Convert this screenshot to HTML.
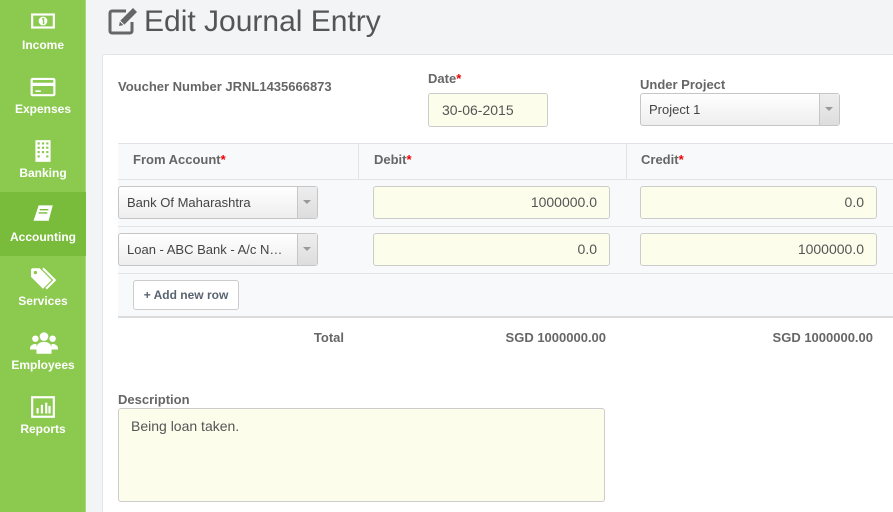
<!DOCTYPE html>
<html style="width:893px;height:512px;overflow:hidden"><head><style>
*{margin:0;padding:0;box-sizing:border-box}
body{width:893px;height:512px;overflow:hidden;background:#f3f4f6;font-family:"Liberation Sans",sans-serif;position:relative;color:#555}
.sb{position:absolute;left:0;top:0;width:86px;height:512px;background:#8bc94f;border-right:1px solid #a6d87a}
.it{position:absolute;left:0;width:86px;height:64px;color:#fff;font-weight:bold;font-size:12px;text-align:center}
.it.act{background:#79bb3a}
.it svg{position:absolute;left:30px;top:11px}
.it span{position:absolute;left:0;right:0;top:38px}
.a{position:absolute}
.lbl{font-size:13px;font-weight:bold;color:#666}
.req{color:#e00}
.inp{position:absolute;background:#fdfdec;border:1px solid #ccc;border-radius:3px;font-size:14px;color:#555}
.sel{position:absolute;background:linear-gradient(#fff,#eee);border:1px solid #c6c6c6;border-radius:3px;font-size:13px;color:#444;padding-left:8px;line-height:31px}
.sel:after{content:"";position:absolute;right:0;top:0;bottom:0;width:19px;border-left:1px solid #c6c6c6;background:linear-gradient(#eee,#ddd)}
.sel i{position:absolute;right:6px;top:13px;width:0;height:0;border:4px solid transparent;border-top:4px solid #999;z-index:2}
.num{text-align:right;padding-right:12px;line-height:31px}
</style></head><body>
<div class="sb">
 <div class="it" style="top:0"><svg width="26" height="20" viewBox="0 0 24 18"><rect x="1" y="2" width="22" height="14" fill="#fff"/><rect x="3" y="4" width="18" height="10" fill="#8bc94f"/><circle cx="12" cy="9" r="4" fill="#fff"/><path d="M11 7h1.5v5" stroke="#8bc94f" stroke-width="1.3" fill="none"/></svg><span>Income</span></div>
 <div class="it" style="top:64px"><svg width="26" height="22" viewBox="0 0 24 20"><rect x="1.5" y="3.5" width="21" height="15" rx="1" fill="none" stroke="#fff" stroke-width="2"/><rect x="1" y="7" width="22" height="3" fill="#fff"/><rect x="5" y="14" width="5" height="1.5" fill="#fff"/></svg><span>Expenses</span></div>
 <div class="it" style="top:128px"><svg width="26" height="24" viewBox="0 0 24 22"><rect x="5" y="1" width="14" height="20" fill="#fff"/><g fill="#8bc94f"><rect x="7" y="3" width="2" height="2"/><rect x="11" y="3" width="2" height="2"/><rect x="15" y="3" width="2" height="2"/><rect x="7" y="7" width="2" height="2"/><rect x="11" y="7" width="2" height="2"/><rect x="15" y="7" width="2" height="2"/><rect x="7" y="11" width="2" height="2"/><rect x="11" y="11" width="2" height="2"/><rect x="15" y="11" width="2" height="2"/><rect x="7" y="15" width="2" height="2"/><rect x="15" y="15" width="2" height="2"/></g></svg><span>Banking</span></div>
 <div class="it act" style="top:192px"><svg width="26" height="22" viewBox="0 0 24 20"><path d="M8 2h13l-4 15H3z" fill="#fff"/><path d="M3 17h14" stroke="#79bb3a" stroke-width="1.5"/><path d="M9 6h8M8 9h8" stroke="#79bb3a" stroke-width="1.3"/></svg><span>Accounting</span></div>
 <div class="it" style="top:256px"><svg width="28" height="24" viewBox="0 0 26 22"><path d="M1 2v7l11 11 8-8L9 1H2z" fill="#fff"/><circle cx="5" cy="5" r="1.6" fill="#8bc94f"/><path d="M12 1l11 11-8 8" stroke="#fff" stroke-width="2" fill="none"/></svg><span>Services</span></div>
 <div class="it" style="top:320px"><svg width="28" height="24" viewBox="0 0 26 22"><circle cx="13" cy="5" r="4" fill="#fff"/><circle cx="5" cy="7" r="3" fill="#fff"/><circle cx="21" cy="7" r="3" fill="#fff"/><path d="M6 21v-6a7 5 0 0 1 14 0v6z" fill="#fff"/><path d="M0 16a5 4 0 0 1 6-4v5H0zM26 16a5 4 0 0 0-6-4v5h6z" fill="#fff"/></svg><span>Employees</span></div>
 <div class="it" style="top:384px"><svg width="26" height="24" viewBox="0 0 24 22"><rect x="2" y="2" width="20" height="18" fill="none" stroke="#fff" stroke-width="2"/><rect x="6" y="12" width="2" height="5" fill="#fff"/><rect x="10" y="9" width="2" height="8" fill="#fff"/><rect x="14" y="7" width="2" height="10" fill="#fff"/><rect x="17" y="10" width="2" height="7" fill="#fff"/></svg><span>Reports</span></div>
</div>

<svg class="a" style="left:108px;top:7px" width="32" height="28" viewBox="0 0 32 28"><path d="M18 4H4a2 2 0 0 0-2 2v18a2 2 0 0 0 2 2h18a2 2 0 0 0 2-2v-9" fill="none" stroke="#666" stroke-width="3"/><path d="M11 19l1-5L25 1l4 4-13 13z" fill="#666"/><path d="M12 14l4 4" stroke="#fff" stroke-width="1"/></svg>
<div class="a" style="left:144px;top:5px;font-size:30px;color:#555">Edit Journal Entry</div>

<div class="a" style="left:102px;top:54px;width:800px;height:470px;background:#fff;border:1px solid #e2e4e6;border-radius:3px"></div>

<div class="a lbl" style="left:118px;top:79px">Voucher Number JRNL1435666873</div>
<div class="a lbl" style="left:428px;top:71px">Date<span class="req">*</span></div>
<div class="inp" style="left:428px;top:93px;width:120px;height:34px;padding-left:13px;line-height:32px;font-size:14px">30-06-2015</div>
<div class="a lbl" style="left:640px;top:77px">Under Project</div>
<div class="sel" style="left:640px;top:93px;width:200px;height:33px">Project 1<i></i></div>

<div class="a" style="left:118px;top:143px;width:775px;height:174px;background:#f8f9fb;border-top:1px solid #dfe2e6"></div>
<div class="a" style="left:118px;top:179px;width:775px;height:1px;background:#e2e5e8"></div>
<div class="a" style="left:118px;top:226px;width:775px;height:1px;background:#e2e5e8"></div>
<div class="a" style="left:118px;top:273px;width:775px;height:1px;background:#e2e5e8"></div>
<div class="a" style="left:118px;top:316px;width:775px;height:2px;background:#dcdcdc"></div>
<div class="a" style="left:358px;top:144px;width:1px;height:35px;background:#e2e5e8"></div>
<div class="a" style="left:626px;top:144px;width:1px;height:35px;background:#e2e5e8"></div>
<div class="a lbl" style="left:133px;top:152px">From Account<span class="req">*</span></div>
<div class="a lbl" style="left:374px;top:152px">Debit<span class="req">*</span></div>
<div class="a lbl" style="left:641px;top:152px">Credit<span class="req">*</span></div>

<div class="sel" style="left:118px;top:186px;width:200px;height:33px">Bank Of Maharashtra<i></i></div>
<div class="inp num" style="left:373px;top:186px;width:237px;height:33px">1000000.0</div>
<div class="inp num" style="left:640px;top:186px;width:237px;height:33px">0.0</div>
<div class="sel" style="left:118px;top:233px;width:200px;height:33px">Loan - ABC Bank - A/c N…<i></i></div>
<div class="inp num" style="left:373px;top:233px;width:237px;height:33px">0.0</div>
<div class="inp num" style="left:640px;top:233px;width:237px;height:33px">1000000.0</div>

<div class="a" style="left:133px;top:280px;width:106px;height:30px;background:#fff;border:1px solid #ccc;border-radius:3px;font-size:12px;font-weight:bold;color:#5a6470;text-align:center;line-height:28px">+ Add new row</div>

<div class="a lbl" style="left:244px;top:330px;width:100px;text-align:right">Total</div>
<div class="a lbl" style="left:406px;top:330px;width:200px;text-align:right">SGD 1000000.00</div>
<div class="a lbl" style="left:673px;top:330px;width:200px;text-align:right">SGD 1000000.00</div>

<div class="a lbl" style="left:118px;top:392px">Description</div>
<div class="inp" style="left:118px;top:408px;width:487px;height:94px;padding:9px 12px;font-size:14px">Being loan taken.</div>
</body></html>
